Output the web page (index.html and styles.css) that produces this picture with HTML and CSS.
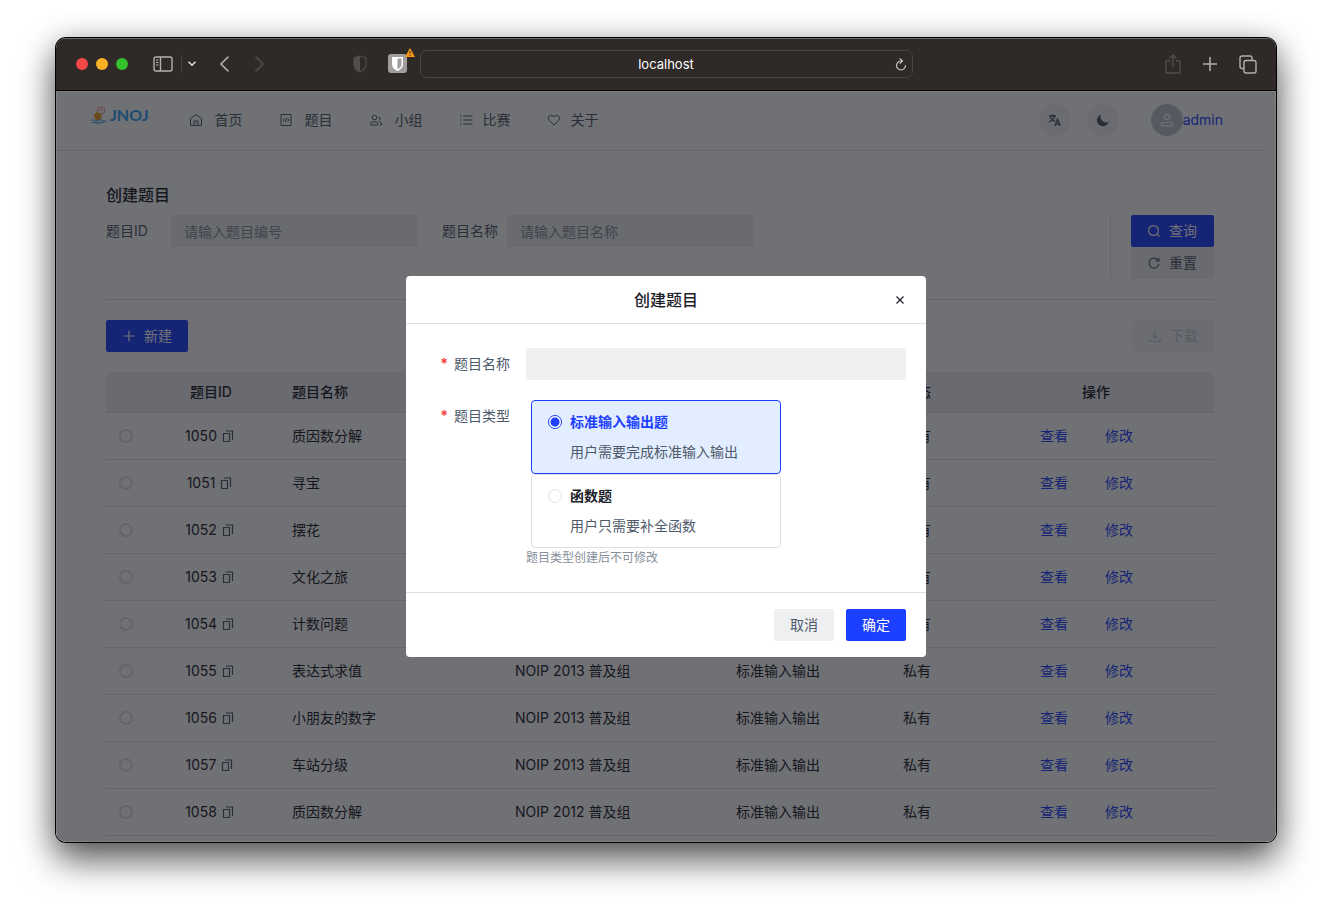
FILE: index.html
```html
<!DOCTYPE html>
<html lang="zh-CN">
<head>
<meta charset="utf-8">
<title>JNOJ</title>
<link rel="stylesheet" href="styles.css">
</head>
<body>
<svg class="sprite" aria-hidden="true">
  <symbol id="copy" viewBox="0 0 12 12"><path d="M1.500 3.500h6v8h-6zM4 1h6.500v9" fill="none" stroke="currentColor" stroke-width="1.2"/></symbol>
</svg>
<div class="window">
  <header class="chrome">
    <div class="chrome-left">
      <div class="lights"><span class="light red"></span><span class="light yellow"></span><span class="light green"></span></div>
      <button class="tool sidebar" aria-label="边栏"><svg width="20" height="16" viewBox="0 0 20 16" fill="none" stroke="currentColor" stroke-width="1.4"><rect x="1" y="1" width="18" height="14" rx="2"/><path d="M7.5 1v14"/><path d="M3 4h2.5M3 6.5h2.5M3 9h2.5" stroke-width="1"/></svg></button>
      <span class="divider"></span>
      <button class="tool chevron" aria-label="标签组"><svg width="8" height="6" viewBox="0 0 8 6" fill="none" stroke="currentColor" stroke-width="1.6" stroke-linecap="round"><path d="M1 1.2l3 3 3-3"/></svg></button>
      <button class="tool back" aria-label="后退"><svg width="11" height="16" viewBox="0 0 11 16" fill="none" stroke="currentColor" stroke-width="1.6" stroke-linecap="round"><path d="M9 1L2 8l7 7"/></svg></button>
      <button class="tool forward dim" aria-label="前进"><svg width="11" height="16" viewBox="0 0 11 16" fill="none" stroke="currentColor" stroke-width="1.6" stroke-linecap="round"><path d="M2 1l7 7-7 7"/></svg></button>
      <button class="tool shield dim" aria-label="隐私"><svg width="14" height="18" viewBox="0 0 14 18"><path d="M7 1l6 2v6c0 4-2.500 6.500-6 8-3.500-1.500-6-4-6-8V3z" fill="none" stroke="currentColor" stroke-width="1.2"/><path d="M7 1v16c-3.500-1.500-6-4-6-8V3z" fill="currentColor"/></svg></button>
      <button class="tool vault" aria-label="密码库">
        <svg width="20" height="20" viewBox="0 0 20 20"><rect width="19" height="19" rx="3" fill="#a09e9d"/><path d="M4 3h11v7c0 3.500-2.500 5.500-5.500 7C6.500 15.500 4 13.500 4 10z" fill="#fff"/><path d="M9.500 4.500H13.500V10c0 2.500-1.500 4-4 5.300z" fill="#a09e9d"/></svg>
        <svg class="warn" width="10" height="9" viewBox="0 0 10 9"><path d="M5 0l5 9H0z" fill="#f7981c"/><path d="M5 3v3M5 7v1" stroke="#4a3212" stroke-width="1.1"/></svg>
      </button>
    </div>
    <div class="address"><span>localhost</span>
      <button class="tool reload" aria-label="重新载入"><svg width="12" height="13" viewBox="0 0 12 13" fill="none" stroke="currentColor" stroke-width="1.2" stroke-linecap="round"><path d="M6 3a4.500 4.500 0 1 0 4.500 4.500M5 .8L7.500 3 5 5.400"/></svg></button>
    </div>
    <div class="chrome-right">
      <button class="tool dim" aria-label="共享"><svg width="16" height="20" viewBox="0 0 16 20" fill="none" stroke="currentColor" stroke-width="1.4"><path d="M5 7H1v12h14V7h-4M8 13V1M4.500 4.500L8 1l3.500 3.500" stroke-linejoin="round"/></svg></button>
      <button class="tool" aria-label="新标签页"><svg width="14" height="14" viewBox="0 0 14 14" fill="none" stroke="currentColor" stroke-width="1.500"><path d="M7 0v14M0 7h14"/></svg></button>
      <button class="tool" aria-label="标签页概览"><svg width="18" height="19" viewBox="0 0 18 19" fill="none" stroke="currentColor" stroke-width="1.400"><rect x="5" y="5.500" width="12" height="12.500" rx="2"/><path d="M5 13.500H3a2 2 0 0 1-2-2V3a2 2 0 0 1 2-2h8a2 2 0 0 1 2 2v2.500"/></svg></button>
    </div>
  </header>

  <div class="viewport">
    <div class="page">
      <nav class="navbar">
        <a class="logo" href="#">
          <svg width="18" height="18" viewBox="0 0 18 18"><circle cx="11" cy="4.500" r="3.700" fill="none" stroke="#e8888c"/><path d="M9 4.500q2-2 4 0" stroke="#e8888c" fill="none"/><path d="M3.500 9l3-3 3.500 1.500 2 3-1.500 3.500-5 .5z" fill="#f0a820"/><path d="M7 9.500l2.500 1.500L7 12.500z" fill="#d0701b"/><path d="M.5 14.500q2-1.500 4 0t4 0 4 0 4 0M2 16.800q2-1 4 0t4 0 4 0" stroke="#58b4ee" stroke-width="1.200" fill="none"/></svg>
          <span>JNOJ</span>
        </a>
        <div class="menu">
          <a href="#"><svg width="14" height="14" viewBox="0 0 14 14" fill="none" stroke="currentColor"><path d="M1.500 5.500L7 1.500l5.500 4v7h-11zM5 12.500V8h4v4.500M6.500 10.500h1"/></svg>首页</a>
          <a href="#"><svg width="14" height="14" viewBox="0 0 14 14" fill="none" stroke="currentColor"><path d="M2 1.500h10v11H2zM5.500 5.500L4 7l1.500 1.500M8.500 5.500L10 7 8.500 8.500M7.500 5l-1 4"/></svg>题目</a>
          <a href="#"><svg width="14" height="14" viewBox="0 0 14 14" fill="none" stroke="currentColor"><circle cx="5.500" cy="4.500" r="2.300"/><path d="M1.500 12v-1.500Q1.500 9 3 9h4.500Q9 9 9 10.500V12zM9.300 4.300a1.500 1.500 0 1 1 .4 2.900M10.300 9q2.200 0 2.200 2v1H11"/></svg>小组</a>
          <a class="near" href="#"><svg width="14" height="14" viewBox="0 0 14 14" fill="none" stroke="currentColor"><path d="M4.500 3h9M4.500 7h9M4.500 11h9M1 3h1.500M1 7h1.500M1 11h1.500"/></svg>比赛</a>
          <a class="near" href="#"><svg width="14" height="14" viewBox="0 0 14 14" fill="none" stroke="currentColor"><path d="M7 12L2.200 7.300a2.900 2.900 0 0 1 0-4.100 2.900 2.900 0 0 1 4.100 0L7 3.900l.7-.7a2.900 2.900 0 0 1 4.100 4.100z"/></svg>关于</a>
        </div>
        <div class="account">
          <button class="round" aria-label="语言"><svg width="14" height="14" viewBox="0 0 14 14" fill="none" stroke="currentColor" stroke-width="1.400"><path d="M1 3h7M4.500 1.300V3M2.200 4C3 6 5 7.500 7 8.300M6.700 3.200C6 6 3.500 8 1.200 8.800M6.800 13l2.700-6.800L12.200 13M7.700 11h3.700"/></svg></button>
          <button class="round" aria-label="主题"><svg width="14" height="14" viewBox="0 0 14 14"><path d="M5 1.500a6 6 0 1 0 7.800 7A5.500 5.500 0 0 1 5 1.500z" fill="currentColor"/></svg></button>
          <a class="user" href="#"><span class="avatar"><svg width="14" height="14" viewBox="0 0 14 14" fill="none" stroke="currentColor" stroke-width="1.200"><circle cx="7" cy="4" r="2.700"/><path d="M1.500 12.800v-1.500q0-1.800 1.800-1.800h7.400q1.800 0 1.800 1.800v1.500z"/></svg></span>admin</a>
        </div>
      </nav>

      <main class="content">
        <h1>创建题目</h1>
        <form class="search">
          <div class="fields">
            <div class="field"><label for="qid">题目ID</label><input id="qid" type="text" placeholder="请输入题目编号"></div>
            <div class="field"><label for="qname">题目名称</label><input id="qname" type="text" placeholder="请输入题目名称"></div>
          </div>
          <div class="search-actions">
            <button type="button" class="btn primary"><svg width="14" height="14" viewBox="0 0 14 14" fill="none" stroke="currentColor" stroke-width="1.200"><circle cx="6.500" cy="6.500" r="4.900"/><path d="M10 10l2.500 2.500"/></svg>查询</button>
            <button type="reset" class="btn"><svg width="14" height="14" viewBox="0 0 14 14" fill="none" stroke="currentColor" stroke-width="1.200"><path d="M11.300 4.500a5 5 0 1 0 .6 3.500M12 1.800v3.200H8.700"/></svg>重置</button>
          </div>
        </form>
        <div class="toolbar">
          <button class="btn primary"><svg width="14" height="14" viewBox="0 0 14 14" fill="none" stroke="currentColor" stroke-width="1.200"><path d="M7 1.500v11M1.500 7h11"/></svg>新建</button>
          <button class="btn" disabled><svg width="14" height="14" viewBox="0 0 14 14" fill="none" stroke="currentColor" stroke-width="1.200"><path d="M7 1.500V9M4.300 6.500L7 9.200l2.700-2.700M2 9.500v2.800h10V9.500"/></svg>下载</button>
        </div>
        <table class="problems">
          <colgroup><col class="c-pick"><col class="c-id"><col><col class="c-source"><col class="c-type"><col class="c-state"><col class="c-ops"></colgroup>
          <thead><tr><th></th><th class="mid">题目ID</th><th>题目名称</th><th>来源</th><th>题目类型</th><th>状态</th><th class="mid">操作</th></tr></thead>
          <tbody>
            <tr><td class="pick"><input type="radio" name="row" aria-label="1050"></td><td class="id">1050 <svg class="copy"><use href="#copy"/></svg></td><td>质因数分解</td><td>NOIP 2013 普及组</td><td>标准输入输出</td><td>私有</td><td class="ops"><a href="#">查看</a><a href="#">修改</a></td></tr>
            <tr><td class="pick"><input type="radio" name="row" aria-label="1051"></td><td class="id">1051 <svg class="copy"><use href="#copy"/></svg></td><td>寻宝</td><td>NOIP 2013 普及组</td><td>标准输入输出</td><td>私有</td><td class="ops"><a href="#">查看</a><a href="#">修改</a></td></tr>
            <tr><td class="pick"><input type="radio" name="row" aria-label="1052"></td><td class="id">1052 <svg class="copy"><use href="#copy"/></svg></td><td>摆花</td><td>NOIP 2013 普及组</td><td>标准输入输出</td><td>私有</td><td class="ops"><a href="#">查看</a><a href="#">修改</a></td></tr>
            <tr><td class="pick"><input type="radio" name="row" aria-label="1053"></td><td class="id">1053 <svg class="copy"><use href="#copy"/></svg></td><td>文化之旅</td><td>NOIP 2013 普及组</td><td>标准输入输出</td><td>私有</td><td class="ops"><a href="#">查看</a><a href="#">修改</a></td></tr>
            <tr><td class="pick"><input type="radio" name="row" aria-label="1054"></td><td class="id">1054 <svg class="copy"><use href="#copy"/></svg></td><td>计数问题</td><td>NOIP 2013 普及组</td><td>标准输入输出</td><td>私有</td><td class="ops"><a href="#">查看</a><a href="#">修改</a></td></tr>
            <tr><td class="pick"><input type="radio" name="row" aria-label="1055"></td><td class="id">1055 <svg class="copy"><use href="#copy"/></svg></td><td>表达式求值</td><td>NOIP 2013 普及组</td><td>标准输入输出</td><td>私有</td><td class="ops"><a href="#">查看</a><a href="#">修改</a></td></tr>
            <tr><td class="pick"><input type="radio" name="row" aria-label="1056"></td><td class="id">1056 <svg class="copy"><use href="#copy"/></svg></td><td>小朋友的数字</td><td>NOIP 2013 普及组</td><td>标准输入输出</td><td>私有</td><td class="ops"><a href="#">查看</a><a href="#">修改</a></td></tr>
            <tr><td class="pick"><input type="radio" name="row" aria-label="1057"></td><td class="id">1057 <svg class="copy"><use href="#copy"/></svg></td><td>车站分级</td><td>NOIP 2013 普及组</td><td>标准输入输出</td><td>私有</td><td class="ops"><a href="#">查看</a><a href="#">修改</a></td></tr>
            <tr><td class="pick"><input type="radio" name="row" aria-label="1058"></td><td class="id">1058 <svg class="copy"><use href="#copy"/></svg></td><td>质因数分解</td><td>NOIP 2012 普及组</td><td>标准输入输出</td><td>私有</td><td class="ops"><a href="#">查看</a><a href="#">修改</a></td></tr>
          </tbody>
        </table>
      </main>
    </div>

    <div class="mask">
      <form class="modal" role="dialog" aria-labelledby="modal-title">
        <div class="modal-head">
          <h2 id="modal-title">创建题目</h2>
          <button type="button" class="close" aria-label="关闭"><svg width="10" height="10" viewBox="0 0 10 10" fill="none" stroke="currentColor" stroke-width="1.200"><path d="M1.500 1.500l7 7M8.500 1.500l-7 7"/></svg></button>
        </div>
        <div class="modal-body">
          <div class="item">
            <label class="item-label" for="name"><span class="star">*</span>题目名称</label>
            <input id="name" class="item-input" type="text">
          </div>
          <div class="item">
            <span class="item-label" id="type-label"><span class="star">*</span>题目类型</span>
            <div class="types" role="radiogroup" aria-labelledby="type-label">
              <label class="card"><input type="radio" name="type" checked><span class="card-title">标准输入输出题</span><span class="card-desc">用户需要完成标准输入输出</span></label>
              <label class="card"><input type="radio" name="type"><span class="card-title">函数题</span><span class="card-desc">用户只需要补全函数</span></label>
              <p class="hint">题目类型创建后不可修改</p>
            </div>
          </div>
        </div>
        <div class="modal-foot">
          <button type="button" class="btn">取消</button>
          <button type="button" class="btn primary">确定</button>
        </div>
      </form>
    </div>
  </div>
</div>
</body>
</html>
```
FILE: styles.css
```css
* { box-sizing: border-box; }

:root {
  --primary: #1d3fff;
  --text: #1d2129;
  --text-2: #4e5969;
  --text-3: #86909c;
  --fill: #edeff1;
  --line: #dfe0e5;
}

body {
  margin: 0;
  height: 100vh;
  padding: 38px 56px 74px;
  background: #fff;
  color: var(--text);
  font: 14px/22px Inter, "Noto Sans CJK SC", sans-serif;
}

button, input { font: inherit; color: inherit; margin: 0; }
button { border: 0; padding: 0; background: none; }
a { color: var(--primary); text-decoration: none; }
h1, h2, p { margin: 0; }
svg { display: block; flex: none; }
.sprite { display: none; }

.window {
  display: flex;
  flex-direction: column;
  height: 100%;
  border-radius: 10px;
  overflow: hidden;
  box-shadow: 0 0 0 1px #000, 0 18px 36px rgba(0, 0, 0, .6), 0 4px 30px rgba(0, 0, 0, .25);
}

/* browser bar */
.chrome {
  display: grid;
  grid-template-columns: 1fr minmax(0, 493px) 1fr;
  align-items: center;
  height: 53px;
  flex: none;
  background: #2f2a28;
  border-bottom: 1px solid #000;
  box-shadow: inset 0 1px 0 #6b6765;
  color: #b4b0ae;
}
.chrome-left, .chrome-right, .lights { display: flex; align-items: center; }
.chrome-left { padding: 0 12px 0 20px; }
.lights { gap: 8px; }
.light { width: 12px; height: 12px; border-radius: 50%; }
.red { background: #f24747; }
.yellow { background: #f9b024; }
.green { background: #35c12f; }
.dim { color: #524d4b; }
.sidebar { margin-left: 25px; }
.divider { width: 1px; height: 18px; margin-left: 8px; background: #47423f; }
.chevron { margin-left: 6px; color: #dedbd9; }
.back { margin-left: 23px; }
.forward { margin-left: 24px; }
.shield { margin-left: auto; }
.vault { position: relative; margin-left: 21px; }
.warn { position: absolute; top: -6px; right: -7px; }
.address {
  display: flex;
  align-items: center;
  justify-content: center;
  position: relative;
  height: 28px;
  border: 1px solid #4b4644;
  border-radius: 7px;
  color: #fff;
  font-size: 13px;
}
.reload { position: absolute; right: 5px; color: #c8c4c2; }
.chrome-right { justify-content: flex-end; gap: 22px; padding-right: 19px; }

/* site */
.viewport { position: relative; flex: 1; min-height: 0; overflow: hidden; background: #fff; }
.page { padding-right: 12px; }
.navbar {
  display: flex;
  align-items: center;
  height: 60px;
  padding: 0 41px 2px 34px;
  border-bottom: 1px solid var(--line);
}
.logo {
  display: flex;
  align-items: center;
  gap: 2px;
  padding-bottom: 9px;
  color: #30a0f4;
  font: 700 16px/20px Lato, sans-serif;
}
.menu { display: flex; gap: 36px; margin-left: 40px; }
.menu a { display: flex; align-items: center; gap: 12px; color: var(--text-2); }
.menu .near { gap: 10px; }
.account { display: flex; align-items: center; gap: 16px; margin-left: auto; }
.round {
  display: grid;
  place-items: center;
  width: 32px;
  height: 32px;
  border-radius: 50%;
  background: #f2f3f5;
  color: var(--text-2);
}
.user { display: flex; align-items: center; margin-left: 16px; }
.avatar {
  display: grid;
  place-items: center;
  width: 32px;
  height: 32px;
  border-radius: 50%;
  background: #bcc5ce;
  color: #fff;
}

.content { padding: 32px 50px; }
h1 { margin-bottom: 8px; font-size: 16px; line-height: 24px; font-weight: 500; }

.search { display: flex; padding-bottom: 20px; border-bottom: 1px solid var(--line); }
.fields {
  flex: 1;
  display: grid;
  grid-template-columns: repeat(3, 1fr);
  align-items: start;
  column-gap: 24px;
  padding-right: 20px;
  border-right: 1px solid var(--line);
}
.field { display: flex; align-items: center; color: var(--text-2); }
.field label { flex: 0 0 65px; }
.field input {
  flex: 1;
  min-width: 0;
  height: 32px;
  padding: 0 12px;
  border: 1px solid transparent;
  border-radius: 2px;
  background: var(--fill);
}
.field input::placeholder { color: var(--text-3); }
.search-actions { display: flex; flex-direction: column; width: 83px; margin-left: 20px; }

.btn {
  display: flex;
  align-items: center;
  gap: 8px;
  height: 32px;
  padding: 0 16px;
  border-radius: 2px;
  background: var(--fill);
  color: var(--text-2);
}
.btn.primary { background: var(--primary); color: #fff; }
.btn:disabled { background: #f5f6f7; color: #c4c8cf; }
.toolbar { display: flex; justify-content: space-between; margin: 20px 0; }

.problems { width: 100%; table-layout: fixed; border-collapse: separate; border-spacing: 0; }
.c-pick { width: 40px; }
.c-id { width: 130px; }
.c-source { width: 221px; }
.c-type { width: 167px; }
.c-state { width: 91px; }
.c-ops { width: 236px; }
.problems th, .problems td {
  height: 47px;
  padding: 0 16px;
  border-bottom: 1px solid var(--line);
  text-align: left;
  vertical-align: middle;
}
.problems th { height: 41px; background: #f0f1f4; font-weight: 500; }
.problems th:first-child { border-top-left-radius: 4px; }
.problems th:last-child { border-top-right-radius: 4px; }
.problems .mid { text-align: center; }
.problems .pick { padding: 0; }
.pick input {
  appearance: none;
  display: block;
  width: 14px;
  height: 14px;
  margin: 0 auto;
  border: 2px solid #dfe0e5;
  border-radius: 50%;
}
.problems .id { padding: 0 19px 0 16px; text-align: center; white-space: nowrap; }
.copy { display: inline-block; width: 12px; height: 12px; margin-left: 1px; vertical-align: -1px; color: var(--text-2); }
.problems .ops { padding-right: 35px; text-align: center; }
.ops a + a { margin-left: 37px; }

/* dialog */
.mask {
  position: absolute;
  inset: 0;
  display: flex;
  align-items: center;
  justify-content: center;
  background: rgba(16, 18, 25, .6);
  box-shadow: inset 0 0 0 1px rgba(255, 255, 255, .12);
}
.modal { width: 520px; border-radius: 4px; background: #fff; }
.modal-head {
  display: flex;
  align-items: center;
  height: 48px;
  padding: 0 20px;
  border-bottom: 1px solid var(--line);
}
.modal-head h2 { flex: 1; padding-left: 12px; text-align: center; font-size: 16px; line-height: 24px; font-weight: 500; }
.close { padding: 1px; }
.modal-body { display: grid; gap: 20px; padding: 24px 20px; }
.item { display: flex; align-items: flex-start; }
.item-label { flex: 0 0 100px; padding-right: 16px; line-height: 32px; text-align: right; color: var(--text-2); }
.star { margin-right: 6px; color: #f53f3f; font-weight: 700; }
.item-input { flex: 1; min-width: 0; height: 32px; padding: 0 12px; border: 0; border-radius: 2px; background: var(--fill); }
.types { flex: 1; }
.card {
  display: grid;
  grid-template-columns: 14px 1fr;
  column-gap: 8px;
  row-gap: 8px;
  align-items: center;
  width: 250px;
  margin-left: 5px;
  padding: 10px 16px;
  border: 1px solid var(--line);
  border-radius: 4px;
}
.card input {
  appearance: none;
  width: 14px;
  height: 14px;
  border: 1px solid var(--line);
  border-radius: 50%;
  background: #fff;
}
.card input:checked {
  border-color: var(--primary);
  background: radial-gradient(circle, var(--primary) 4px, #fff 5px);
}
.card-title { font-weight: 700; }
.card-desc { grid-column: 2; color: var(--text-2); }
.card:has(:checked) { border-color: var(--primary); background: #e2eeff; }
.card:has(:checked) .card-title { color: var(--primary); }
.hint { font-size: 12px; line-height: 20px; color: var(--text-3); }
.modal-foot {
  display: flex;
  justify-content: flex-end;
  gap: 12px;
  padding: 16px 20px;
  border-top: 1px solid var(--line);
}
```
